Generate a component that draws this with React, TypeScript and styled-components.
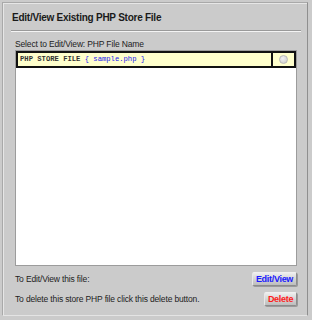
import React from 'react';
import styled, { createGlobalStyle } from 'styled-components';

const GlobalStyle = createGlobalStyle`
    html, body {
        margin: 0;
        padding: 0;
        background: #cbcbcb;
    }
    body {
        font-family: "Liberation Sans", Arial, sans-serif;
        color: #222;
    }
`;

const Panel = styled.div`
    box-sizing: border-box;
    margin: 2px;
    width: 306px;
    height: 314px;
    border: 1px solid #a9a9a9;
    border-right-color: #8f8f8f;
    border-bottom-color: #e4e4e4;
    box-shadow: inset 1px 1px 0 #e6e6e6;
    padding: 0 6px 0 8px;
    display: flex;
    flex-direction: column;
`;

const Title = styled.h1`
    margin: 0;
    padding: 9px 0 0 1px;
    height: 17px;
    font-size: 10px;
    font-weight: bold;
    color: #1a1a1a;
    letter-spacing: -0.25px;
`;

const Rule = styled.hr`
    margin: 1px 0 0;
    border: 0;
    border-top: 1px solid #9a9a9a;
    border-bottom: 1px solid #f4f4f4;
    height: 0;
`;

const Section = styled.div`
    padding: 0 4px;
    display: flex;
    flex-direction: column;
    font-size: 8.5px;
    letter-spacing: -0.15px;
`;

const Label = styled.div`
    margin-top: 7px;
    height: 11px;
    color: #222;
`;

const ListBox = styled.div`
    box-sizing: border-box;
    height: 216px;
    background: #fff;
    border: 1px solid #9c9c9c;
    display: flex;
    flex-direction: column;
`;

const FileRow = styled.div`
    box-sizing: border-box;
    height: 17px;
    background: #ffffcc;
    border: 2px solid #111;
    display: flex;
    align-items: stretch;
`;

const FileName = styled.div`
    flex: 1;
    padding-left: 2px;
    line-height: 13px;
    font-family: "Liberation Mono", "Courier New", monospace;
    font-size: 7.2px;
    letter-spacing: 0;
    white-space: pre;
`;

const Kind = styled.span`
    font-weight: bold;
    color: #333;
`;

const Name = styled.span`
    color: #2020ee;
`;

const RadioCell = styled.div`
    width: 21px;
    border-left: 2px solid #111;
    display: flex;
    align-items: center;
    justify-content: center;
`;

const Radio = styled.span`
    box-sizing: border-box;
    width: 9px;
    height: 9px;
    border-radius: 50%;
    border: 1px solid #b8b8b8;
    background: radial-gradient(circle at 40% 35%, #f2f2f2, #c8c8c8);
`;

const ActionRow = styled.div<{ $gap: number }>`
    margin-top: ${(p) => p.$gap}px;
    display: flex;
    align-items: center;
    justify-content: space-between;
`;

const Button = styled.button<{ $color: string; $width: number }>`
    box-sizing: border-box;
    width: ${(p) => p.$width}px;
    height: 14px;
    padding: 0;
    font-family: "Liberation Sans", Arial, sans-serif;
    font-size: 9px;
    font-weight: bold;
    letter-spacing: -0.3px;
    color: ${(p) => p.$color};
    background: linear-gradient(#eeeeee, #cfcfcf 60%, #bdbdbd);
    border: 1px solid #8c8c8c;
    border-top-color: #f0f0f0;
    border-left-color: #e8e8e8;
    box-shadow: 1px 1px 0 #9a9a9a;
    border-radius: 2px;
    cursor: pointer;
`;

export default function App() {
    return (
        <>
            <GlobalStyle />
            <Panel>
                <Title>Edit/View Existing PHP Store File</Title>
                <Rule />
                <Section>
                    <Label>Select to Edit/View: PHP File Name</Label>
                    <ListBox>
                        <FileRow>
                            <FileName>
                                <Kind>PHP STORE FILE</Kind> <Name>{'{ sample.php }'}</Name>
                            </FileName>
                            <RadioCell>
                                <Radio />
                            </RadioCell>
                        </FileRow>
                    </ListBox>
                    <ActionRow $gap={6}>
                        <span>To Edit/View this file:</span>
                        <Button $color="#1a1aff" $width={45}>
                            Edit/View
                        </Button>
                    </ActionRow>
                    <ActionRow $gap={6}>
                        <span>To delete this store PHP file click this delete button.</span>
                        <Button $color="#ff1a1a" $width={33}>
                            Delete
                        </Button>
                    </ActionRow>
                </Section>
            </Panel>
        </>
    );
}
